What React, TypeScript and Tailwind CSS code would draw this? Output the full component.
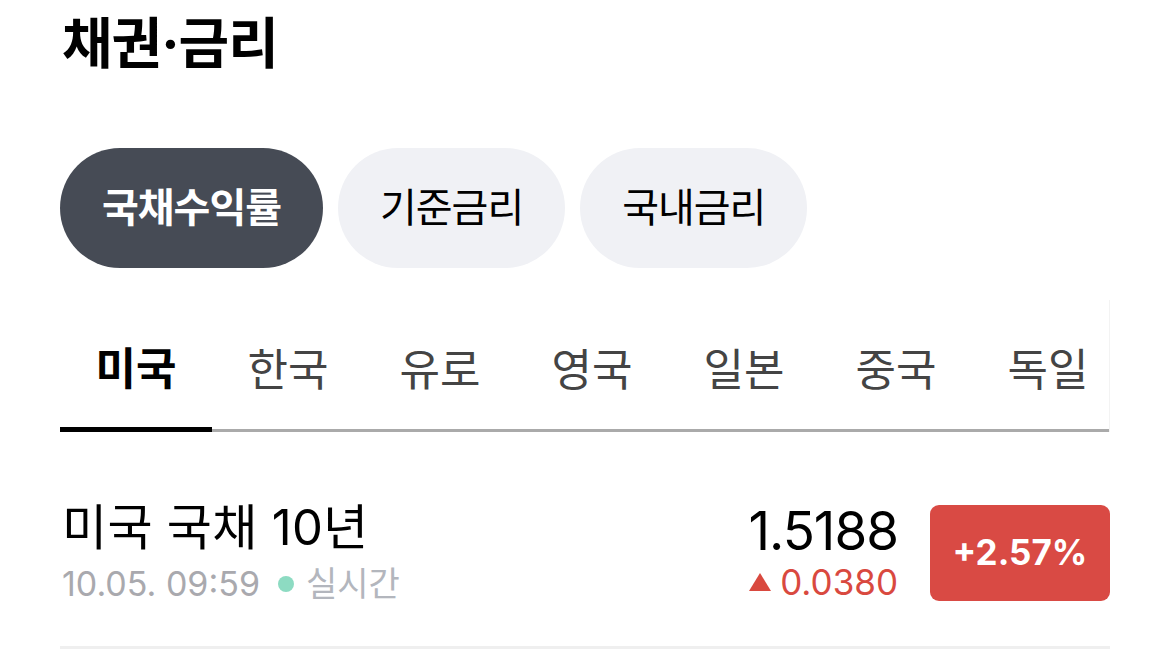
import React from "react";

const tabs = ["미국", "한국", "유로", "영국", "일본", "중국", "독일"];
const pills = ["국채수익률", "기준금리", "국내금리"];

export default function App() {
  return (
    <div
      className="w-[1170px] h-[658px] bg-white overflow-hidden px-[60px]"
      style={{ fontFamily: 'Inter, "Noto Sans CJK KR", sans-serif' }}
    >
      <h1 className="pt-[10px] h-[148px] text-[55px] leading-[66px] font-bold text-black pl-[2px] tracking-[-1px]">
        채권·금리
      </h1>

      <div className="flex gap-[15px]">
        {pills.map((p, i) => (
          <div
            key={p}
            className={
              i === 0
                ? "h-[120px] px-[42px] rounded-full bg-[#464b55] text-white font-bold flex items-center text-[40px] tracking-[-1px]"
                : "h-[120px] px-[42px] rounded-full bg-[#f0f1f5] text-black flex items-center text-[40px] tracking-[-1px]"
            }
          >
            {p}
          </div>
        ))}
      </div>

      <div className="mt-[32px] w-[1050px] overflow-hidden border-r border-[#f3f3f3]">
        <div className="flex">
          {tabs.map((t, i) => (
            <div
              key={t}
              className="shrink-0 w-[152px] h-[132px] flex flex-col justify-end"
            >
              <div
                className={
                  i === 0
                    ? "flex-1 flex items-center justify-center pt-[10px] text-[44px] font-bold text-black"
                    : "flex-1 flex items-center justify-center pt-[10px] text-[44px] text-[#444]"
                }
              >
                {t}
              </div>
              {i === 0 ? (
                <div className="h-[5px] bg-black" />
              ) : (
                <div className="h-[3px] bg-[#aaaaaa]" />
              )}
            </div>
          ))}
        </div>
      </div>

      <div className="mt-[69px] flex items-center justify-between w-[1050px]">
        <div className="flex flex-col pl-[2px]">
          <div className="text-[49px] leading-[54px] text-black tracking-[0.3px]">
            미국 국채 10년
          </div>
          <div className="mt-[9px] flex items-center text-[34px] leading-[40px] text-[#a9a9ae]">
            <span>10.05. 09:59</span>
            <span className="ml-[18px] w-[16px] h-[16px] rounded-full bg-[#8ddbc2]" />
            <span className="ml-[12px] text-[#b3b6bd]">실시간</span>
          </div>
        </div>
        <div className="flex items-center">
          <div className="flex flex-col items-end">
            <div className="text-[53px] leading-[56px] text-black tracking-[-1px]">1.5188</div>
            <div className="mt-[3px] flex items-center text-[35px] leading-[40px] text-[#d9493f]">
              <svg width="24" height="20" viewBox="0 0 24 20" className="mr-[8px]">
                <polygon points="12,1 23,19 1,19" fill="#d9493f" />
              </svg>
              0.0380
            </div>
          </div>
          <div className="ml-[32px] w-[180px] h-[96px] rounded-[9px] bg-[#d94a44] text-white font-bold text-[35px] flex items-center justify-center">
            +2.57%
          </div>
        </div>
      </div>

      <div className="mt-[42px] w-[1050px] h-[3px] bg-[#efefef]" />
    </div>
  );
}
